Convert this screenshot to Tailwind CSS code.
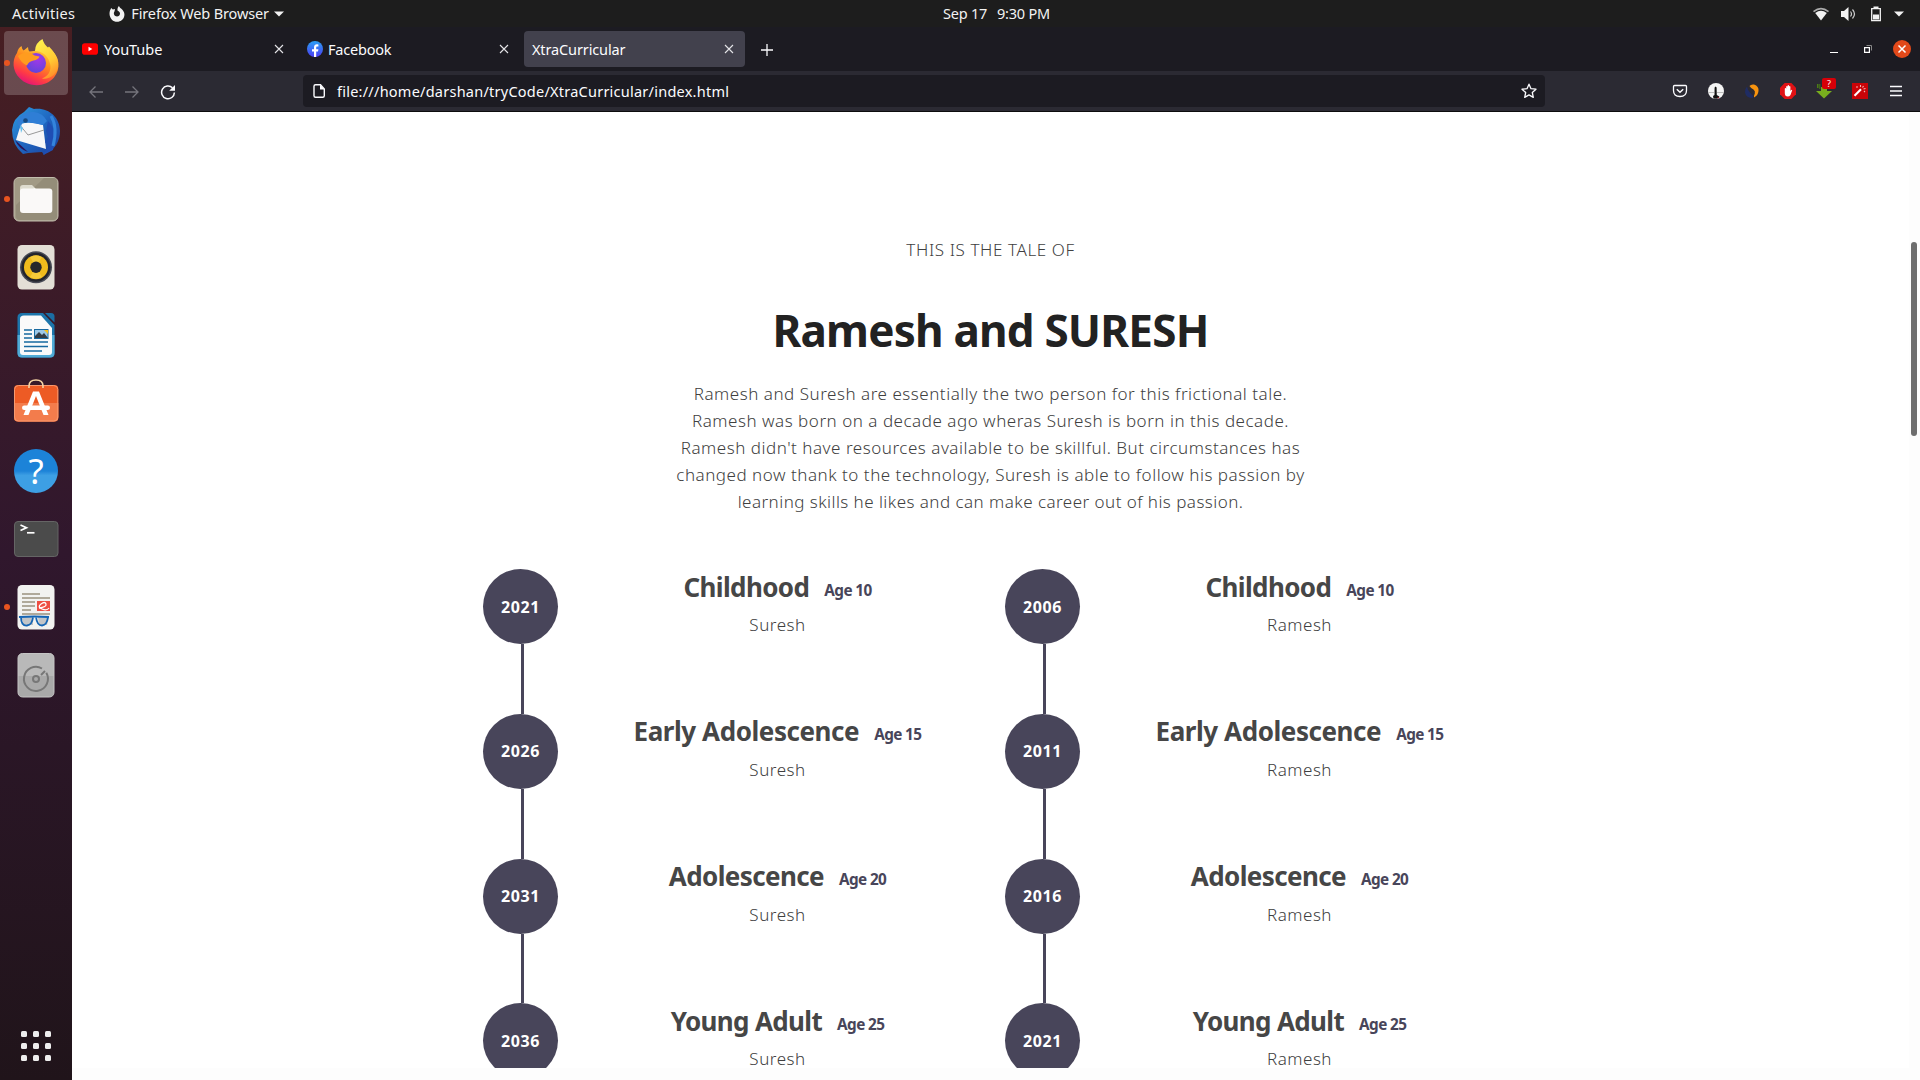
<!DOCTYPE html>
<html lang="en">
<head>
<meta charset="utf-8">
<title>XtraCurricular</title>
<script src="https://cdn.jsdelivr.net/npm/@tailwindcss/browser@4"></script>
</head>
<body class="h-[1080px] w-[1920px] overflow-hidden bg-[#1c1b22] font-['Noto_Sans',sans-serif] text-[14.5px] text-[#fbfbfe]">
<div class="flex h-[1080px] flex-col">
  <!-- desktop top bar -->
  <header class="grid h-[27px] shrink-0 grid-cols-3 items-center bg-[#1d1d1d] text-[#f2f2f2]">
    <div class="flex items-center pl-3 whitespace-nowrap">
      <span class="tracking-[0.29px]">Activities</span>
      <svg class="ml-[34px] h-4 w-4" viewBox="0 0 16 16"><path fill="#f2f2f2" d="M1 4.500 2.200 2l1.600 1.500L6 3 5.500 5.500C4.500 6.500 4.600 9 6.300 10c2 1.200 4.700 0 4.700-2.500C11 6 9.500 5 8.500 4.500 8.300 2.800 8.700 1.300 10 0c.3 1.600 2 2.200 3.600 4 2.700 3.200 2.300 7-.4 9.700-3 2.800-7.500 2.800-10.300 0C.5 11.400 0 7.500 1 4.500z"/></svg>
      <span class="ml-[6px] tracking-[-0.14px]">Firefox Web Browser</span>
      <svg class="ml-[5px] h-[6px] w-[10px]" viewBox="0 0 10 6"><path fill="#f2f2f2" d="M0 .5h10L5 5.500z"/></svg>
    </div>
    <div class="flex items-center pl-[303px] whitespace-nowrap">
      <span class="w-[54px] tracking-[-0.2px]">Sep 17</span><span class="tracking-[-0.2px]">9:30 PM</span>
    </div>
    <div class="flex items-center justify-end pr-4">
      <svg class="h-4 w-4" viewBox="0 0 16 16"><path fill="#aaa" d="M0 5Q8-1.500 16 5L15 6.300Q8 .8 1 6.300z"/><path fill="#f2f2f2" d="M2.200 7Q8 2.500 13.800 7L8 14.500z"/></svg>
      <svg class="ml-3 h-4 w-4" viewBox="0 0 16 16"><path fill="#f2f2f2" d="M0 5h3l4.500-4v14L3 11H0z"/><path d="M9.500 5.500q2 2.500 0 5M11.500 3.500q4 4.500 0 9" fill="none" stroke="#ccc" stroke-width="1.200"/></svg>
      <svg class="ml-[13px] h-4 w-3" viewBox="0 0 12 16"><path d="M1.700 2.700h8.600v12H1.700z" fill="none" stroke="#f2f2f2" stroke-width="1.300"/><path fill="#f2f2f2" d="M3.500.5h5v2h-5zM3 8.500h6v5H3z"/></svg>
      <svg class="ml-[12px] h-[6px] w-[10px]" viewBox="0 0 10 6"><path fill="#f2f2f2" d="M0 .5h10L5 5.500z"/></svg>
    </div>
  </header>

  <div class="flex min-h-0 flex-1">
    <!-- dock -->
    <aside class="flex w-[72px] shrink-0 flex-col items-center justify-between bg-linear-to-b from-[#471e22] via-[#30172d] to-[#20141a] pt-1 pb-[19px]">
      <div class="flex w-full flex-col gap-1 px-1">
        <div class="relative rounded bg-white/20">
          <svg class="h-16 w-16" viewBox="0 0 64 64">
            <defs>
              <linearGradient id="ffb" x1=".8" y1=".1" x2=".3" y2="1"><stop offset="0" stop-color="#ffd83a"/><stop offset=".4" stop-color="#ff8a1e"/><stop offset=".75" stop-color="#ff3b45"/><stop offset="1" stop-color="#e2107c"/></linearGradient>
              <linearGradient id="fff" x1=".3" y1="0" x2=".7" y2="1"><stop offset="0" stop-color="#fff04d"/><stop offset=".6" stop-color="#ffc933"/><stop offset="1" stop-color="#ff8a2a"/></linearGradient>
              <radialGradient id="ffp" cx=".6" cy=".3" r=".8"><stop offset="0" stop-color="#a238e8"/><stop offset="1" stop-color="#5a45d8"/></radialGradient>
            </defs>
            <path fill="url(#ffb)" d="M13 22q1-5 4.500-7 .3 3 2.200 4.500L24 16q0 3 1.500 4.500L46 18c10 7 11 20 4 28.500-8.500 10-25 10-34 1C8 39.500 8 29 13 22z"/>
            <path fill="url(#fff)" d="M31 20q0-8 7.500-12 1.200 5 5.500 8.500l1-1c10 10 12 20 5 28-4 4-9 5-12 4 6-2 10-8 8-15C44 24 37 20 31 20z"/>
            <circle cx="32" cy="32" r="10" fill="url(#ffp)"/>
            <path fill="#ff9c1f" d="M14 25q6-5 13-3 3 3 8.500 3.500-1 3-6 4-5 1-6.500 5Q17 32 14 25z"/>
          </svg>
          <i class="absolute top-[29px] left-0 h-[6px] w-[6px] rounded-full bg-[#e95420]"></i>
        </div>
        <svg class="h-16 w-16" viewBox="0 0 64 64">
          <defs><linearGradient id="tb" x1="0" y1="0" x2="1" y2="1"><stop offset="0" stop-color="#2e9be0"/><stop offset=".5" stop-color="#1f66c0"/><stop offset="1" stop-color="#1c3f9c"/></linearGradient></defs>
          <path fill="url(#tb)" d="M8 31q1-12 12-18l5-5 5 2c14-2 26 8 26 22 0 10-5 19-15 23l-1 1-2-3-14 1-5 1q-11-9-11-24z"/>
          <path fill="#2a1458" d="M11 41l13 12q-9-3-13-12z"/>
          <path fill="#f7f7f8" d="M17 25q8-3 22 1l3 24-30-9z"/>
          <path d="M15 25l9 11 16-5" fill="none" stroke="#999" stroke-width="1"/>
          <path fill="#2f7ed6" d="M13 22q6-10 17-9 9 1 13 9l-4 4-20-4-3 8z"/><circle cx="21.500" cy="21.500" r="2.300" fill="#174a82"/><path fill="#69c2ee" d="M16 26l3 3-2 5z"/>
          <path fill="#1f4eb4" d="M44 22q10 10 5 29l-10 5 5-9-3-4 3-5-2-6z"/>
          <path d="M47 17q7 11 2 30" fill="none" stroke="#3484dc" stroke-width="3"/>
        </svg>
        <div class="relative">
          <svg class="h-16 w-16" viewBox="0 0 64 64">
            <rect x="10" y="10.500" width="44" height="43.500" rx="5" fill="#a19a85" stroke="#c3beae"/><path fill="#8f8873" opacity=".7" d="M12 38L40 11h10q3 0 3 4v34q0 4-4 4H16q-4 0-4-4z"/>
            <path fill="#dedccf" d="M16 21q0-3 3-3h9l4 4h-2v6H16z"/><rect x="16" y="21.500" width="32.300" height="24.500" rx="3" fill="#faf9f8"/><path fill="#faf9f8" d="M16 25q0-2 2-2h9l4-2v6H16z"/>
          </svg>
          <i class="absolute top-[29px] left-0 h-[6px] w-[6px] rounded-full bg-[#e95420]"></i>
        </div>
        <svg class="h-16 w-16" viewBox="0 0 64 64">
          <rect x="13.500" y="10" width="37" height="44.500" rx="4.500" fill="#e3dfd6"/><circle cx="32" cy="32.300" r="16" fill="#484b55"/><circle cx="32" cy="32.300" r="14.500" fill="#23252c"/><circle cx="32" cy="32.300" r="12" fill="#efbb1c"/><path fill="#f8d34c" d="M32 32l-6 10q6 3.500 12 0zM32 32l-6-10q6-3.500 12 0z" opacity=".6"/><circle cx="32" cy="32.300" r="5.700" fill="#26272b"/>
        </svg>
        <svg class="h-16 w-16" viewBox="0 0 64 64">
          <path fill="#1c75ab" d="M18 10h21l11.500 12v28q0 4.500-4.500 4.500H18q-4.500 0-4.500-4.500V14.500q0-4.500 4.500-4.500z"/><path fill="#50abd6" d="M13.500 32h37v18q0 4.500-4.500 4.500H18q-4.500 0-4.500-4.500z"/>
          <path fill="#fafafa" d="M20 12.500h17L48 25v24q0 3-3 3H19q-3 0-3-3V16q0-3.500 4-3.500z"/><path fill="#1b6da3" d="M41 10h6q3.500 0 3.500 3.500v6z"/>
          <path d="M20 27h8M20 31h8M20 35h8M20 39h24M20 43.500h24M20 48h18" stroke="#1769a0" stroke-width="1.700"/><rect x="30.500" y="26.500" width="13.500" height="9" fill="#9cc8e8" stroke="#1769a0"/><path fill="#333d46" d="M31 35v-2l4-4 3 3 2-2 4 5z"/><path fill="#f7c21c" d="M40 27h4v4z"/>
        </svg>
        <svg class="h-16 w-16" viewBox="0 0 64 64">
          <rect x="10" y="14" width="44.300" height="36.500" rx="4" fill="#ed5b25"/><path fill="#f37c4c" d="M10 32h44.300v14.500q0 4-4 4H14q-4 0-4-4z"/><rect x="10.500" y="14.500" width="43.300" height="35.500" rx="4" fill="none" stroke="#f79a70"/>
          <path d="M25 17v-2q0-6 7-6t7 6v2" fill="none" stroke="#f5d4a4" stroke-width="1.600"/>
          <path fill="#fff" d="M29 20.500h6L44.500 44h-5L32 25l-7.500 19h-5z"/><rect x="18" y="34.500" width="28" height="4.500" rx="2.200" fill="#fff"/>
        </svg>
        <div class="flex h-16 w-16 items-center justify-center"><div class="flex h-[44px] w-[44px] items-center justify-center rounded-full bg-linear-to-b from-[#1c83d8] from-50% to-[#3d9fe4] to-60% pb-0.5 text-[35px] leading-none text-white">?</div></div>
        <svg class="h-16 w-16" viewBox="0 0 64 64">
          <rect x="10.500" y="14.500" width="43.500" height="35" rx="3.500" fill="#4b4b4b" stroke="#656565"/><path d="M16.500 18l6 2.700-6 2.800" fill="none" stroke="#fff" stroke-width="1.700"/><path d="M23 25.800h7.500" stroke="#fff" stroke-width="1.700"/>
        </svg>
        <div class="relative">
          <svg class="h-16 w-16" viewBox="0 0 64 64">
            <rect x="13.500" y="10" width="37" height="44.500" rx="4.500" fill="#f2f2f0"/><path d="M18 19h18M18 23h28M18 27h13M18 31h13M18 35h9M18 39h28" stroke="#b0a99a" stroke-width="1.800"/>
            <rect x="33" y="26" width="13" height="10" fill="#ee4e42"/><path d="M35 33q8-1 7-4t-5 0 1 5 7-1" fill="none" stroke="#fff" stroke-width="1.300"/>
            <path fill="#9aa0a8" opacity=".55" d="M17 42h12v8h-9zM34 42h11l-2 8h-8z"/><path d="M15 42q16-1 30 0M17 42q0 9 6 8.500 5-.5 6-8M32 42q1 8.500 6 8.500 5-.5 6-8.500" fill="none" stroke="#1565b4" stroke-width="1.800"/>
          </svg>
          <i class="absolute top-[29px] left-0 h-[6px] w-[6px] rounded-full bg-[#e95420]"></i>
        </div>
        <svg class="h-16 w-16" viewBox="0 0 64 64">
          <rect x="14" y="10.500" width="36" height="43.500" rx="4.500" fill="#a9a9a9" stroke="#c4c4c4"/><path fill="#c4c4c4" opacity=".6" d="M14 15q0-4.500 4.500-4.500h27Q50 10.500 50 15v18H14z"/>
          <path d="M38 25.500a12 12 0 1 0 4.300 4.300" fill="none" stroke="#777" stroke-width="2"/><path d="M37 32l4-4" stroke="#777" stroke-width="2"/><circle cx="32" cy="36" r="3" fill="none" stroke="#777" stroke-width="2"/>
        </svg>
      </div>
      <div class="grid grid-cols-3 gap-[6px]">
        <i class="h-[6px] w-[6px] rounded-[1.5px] bg-[#eee]"></i><i class="h-[6px] w-[6px] rounded-[1.5px] bg-[#eee]"></i><i class="h-[6px] w-[6px] rounded-[1.5px] bg-[#eee]"></i>
        <i class="h-[6px] w-[6px] rounded-[1.5px] bg-[#eee]"></i><i class="h-[6px] w-[6px] rounded-[1.5px] bg-[#eee]"></i><i class="h-[6px] w-[6px] rounded-[1.5px] bg-[#eee]"></i>
        <i class="h-[6px] w-[6px] rounded-[1.5px] bg-[#eee]"></i><i class="h-[6px] w-[6px] rounded-[1.5px] bg-[#eee]"></i><i class="h-[6px] w-[6px] rounded-[1.5px] bg-[#eee]"></i>
      </div>
    </aside>

    <div class="flex min-w-0 flex-1 flex-col">
      <!-- tabs -->
      <div class="flex h-11 shrink-0 items-center bg-[#1c1b22] pl-[2px]">
        <div class="flex gap-1">
          <div class="flex h-9 w-[221px] items-center pr-[11px] pl-2">
            <svg class="h-4 w-4" viewBox="0 0 16 16"><rect y="2.300" width="16" height="11.400" rx="2.800" fill="#f00"/><path fill="#fff" d="M6.500 5.700v4.600L10.300 8z"/></svg>
            <span class="ml-[6px] flex-1 pt-0.5 tracking-[-0.05px]">YouTube</span>
            <svg class="h-[10px] w-[10px]" viewBox="0 0 10 10"><path d="M1 1l8 8M9 1L1 9" stroke="#e4e4e8" stroke-width="1.100"/></svg>
          </div>
          <div class="flex h-9 w-[221px] items-center pr-[11px] pl-2">
            <svg class="h-4 w-4" viewBox="0 0 16 16"><defs><linearGradient id="fb" x1="0" y1="0" x2="0" y2="1"><stop offset="0" stop-color="#2aa0f5"/><stop offset="1" stop-color="#4b3df0"/></linearGradient></defs><circle cx="8" cy="8" r="8" fill="url(#fb)"/><path fill="#fff" d="M7 16v-5.500H5V8.200h2V6.500C7 4.400 8.200 3.300 10 3.300l1.400.1v2h-1c-1 0-1.200.5-1.200 1.200v1.600h2.200l-.4 2.300H9.200V16z"/></svg>
            <span class="ml-[5px] flex-1 pt-0.5 tracking-[-0.2px]">Facebook</span>
            <svg class="h-[10px] w-[10px]" viewBox="0 0 10 10"><path d="M1 1l8 8M9 1L1 9" stroke="#e4e4e8" stroke-width="1.100"/></svg>
          </div>
          <div class="flex h-9 w-[221px] items-center rounded bg-[#42414d] pr-[11px] pl-2">
            <span class="flex-1 pt-0.5 tracking-[-0.13px]">XtraCurricular</span>
            <svg class="h-[10px] w-[10px]" viewBox="0 0 10 10"><path d="M1 1l8 8M9 1L1 9" stroke="#e4e4e8" stroke-width="1.100"/></svg>
          </div>
        </div>
        <svg class="mt-px ml-[16px] h-3 w-3" viewBox="0 0 12 12"><path d="M6 0v12M0 6h12" stroke="#fbfbfe" stroke-width="1.300"/></svg>
        <div class="ml-auto flex items-center pr-[9px]">
          <svg class="mt-1 h-3 w-2" viewBox="0 0 8 12"><path fill="#fff" d="M0 7h8v1H0z"/></svg>
          <svg class="ml-[26px] h-2 w-2" viewBox="0 0 8 8"><path d="M2.500.5h5v5" fill="none" stroke="#888"/><path d="M.6 2.600h4.800v4.800H.6z" fill="none" stroke="#fff" stroke-width="1.200"/></svg>
          <svg class="ml-[21px] h-[18px] w-[18px]" viewBox="0 0 18 18"><circle cx="9" cy="9" r="9" fill="#e2491a"/><path d="M5.500 5.500l7 7m0-7l-7 7" stroke="#fff" stroke-width="1.500"/></svg>
        </div>
      </div>
      <!-- toolbar -->
      <div class="flex h-[41px] shrink-0 items-center border-b border-[#0c0c0d] bg-[#2b2a33] pr-4 pl-[6px]">
        <svg class="mx-[10px] mt-px h-4 w-4" viewBox="0 0 16 16"><path d="M15 8H2M7.500 2.500L2 8l5.500 5.500" fill="none" stroke="#75747c" stroke-width="1.300"/></svg>
        <svg class="mx-[10px] mt-px h-4 w-4" viewBox="0 0 16 16"><path d="M1 8h13M8.500 2.500L14 8l-5.500 5.500" fill="none" stroke="#75747c" stroke-width="1.300"/></svg>
        <svg class="mx-[10px] mt-px h-4 w-4" viewBox="0 0 16 16"><path d="M12.500 3.800A6.400 6.400 0 1 0 14.400 8.500" fill="none" stroke="#fbfbfe" stroke-width="1.500"/><path fill="#fbfbfe" d="M15 1v5.800H9.200z"/></svg>
        <div class="ml-[117px] flex h-8 flex-1 items-center rounded bg-[#1c1b22] px-2">
          <svg class="h-4 w-4" viewBox="0 0 16 16"><path d="M4.500 1.700h5L13.300 6v6.800q0 1.500-1.500 1.500H4.500Q3 14.300 3 12.800V3.200q0-1.500 1.500-1.500z" fill="none" stroke="#fbfbfe" stroke-width="1.400"/><path fill="#fbfbfe" d="M9 1.500L13.500 6.500H9z"/></svg>
          <span class="ml-[10px] flex-1 pt-0.5 tracking-[0.24px]">file:///home/darshan/tryCode/XtraCurricular/index.html</span>
          <svg class="h-4 w-4" viewBox="0 0 16 16"><path d="M8 1.200l2 4.500 5 .5-3.700 3.300 1 4.900L8 11.900l-4.300 2.500 1-4.900L1 6.200l5-.5z" fill="none" stroke="#fbfbfe" stroke-width="1.300" stroke-linejoin="round"/></svg>
        </div>
        <div class="ml-[127px] flex items-center gap-5">
          <svg class="h-4 w-4" viewBox="0 0 16 16"><path d="M2.500 2.500h11q1 0 1 1V7.500q0 6-6.500 6t-6.500-6v-4q0-1 1-1z" fill="none" stroke="#fbfbfe" stroke-width="1.300"/><path d="M4.800 6.300L8 9.300l3.200-3" fill="none" stroke="#fbfbfe" stroke-width="1.500"/></svg>
          <svg class="h-4 w-4" viewBox="0 0 16 16"><circle cx="8" cy="8" r="8" fill="#f4f4f4"/><path d="M0 9.500h6M9 9.500h7" stroke="#bbb"/><path fill="#111" d="M6.600 4.500l1-1 1 1 .2 7.500 2.500 1.500-.3 1.500-2.500.8-3-.3-.5-2.500L6.500 12z"/><path fill="#c23" d="M9.500 14l2 .8-1.500.7z"/></svg>
          <svg class="h-4 w-4" viewBox="0 0 16 16"><path fill="#f7930f" d="M5.500 3Q7 1 10 1.500q5 1.500 4.500 6.500-.5 4.500-4.500 6.500-.3-1.500.8-4Q11.500 8 9.500 6.500 7 5.500 5.500 3z"/><path fill="#1f2c63" d="M3 3.500Q.5 6 1 9.500q1 5.500 8 5.500 .3-1.500-.3-2.500Q7 11 6 9.500 3.500 7 3 3.500z"/></svg>
          <svg class="h-4 w-4" viewBox="0 0 16 16"><path fill="#e01114" d="M4.700 0h6.600L16 4.700v6.600L11.300 16H4.700L0 11.300V4.700z"/><path fill="#fff" d="M4.800 6q0-1 .6-1 .7 0 .8 1v-2q0-1 .7-1t.7 1V3q0-1 .7-1T9 3v1q0-1 .7-1t.7 1v4l.8-1q.8-.5 1 .3L10.500 12Q9.500 13.500 7.800 13.500 4.800 13.500 4.800 10z"/></svg>
          <div class="relative h-4 w-4">
            <svg class="h-4 w-4" viewBox="0 0 16 16"><path fill="#78ae1e" d="M5 4h6v4h5L8 15.500 0 8h5z"/><path fill="#4c7d14" d="M1 1h1.500v4H1zM3.300 1h1v5h-1z"/></svg>
            <span class="absolute -top-[5px] left-[6px] flex h-[11px] w-[14px] items-center justify-center rounded-xs bg-[#d70008] text-[9px] leading-none text-white">?</span>
          </div>
          <svg class="h-4 w-4" viewBox="0 0 16 16"><path fill="#c90408" d="M0 0h16v16H0z"/><path d="M2.500 12.700L9 6.300" stroke="#fff" stroke-width="2.200"/><path d="M4 4h2M8.500 2v2M11.500 3l-1 1.500M13.500 5.500l-2 .5M12 8l1 1" stroke="#f3b4b4" stroke-width="1.100"/></svg>
          <svg class="h-4 w-4" viewBox="0 0 16 16"><path d="M2 3.500h12M2 8h12M2 12.500h12" stroke="#fbfbfe" stroke-width="1.400"/></svg>
        </div>
      </div>
      <!-- page -->
      <div class="flex min-h-0 flex-1 bg-[#fdfdfd]">
        <main class="h-[956px] w-[1837px] overflow-hidden bg-white pt-[124px] text-center text-[17px] leading-[27px] font-light text-[#404040]">
          <p class="tracking-[0.6px]">THIS IS THE TALE OF</p>
          <h1 class="mt-[37px] text-[44px] leading-[60px] font-bold tracking-[-0.8px] text-[#222]">Ramesh and SURESH</h1>
          <p class="mt-[20px] tracking-[0.52px]">Ramesh and Suresh are essentially the two person for this frictional tale.<br>Ramesh was born on a decade ago wheras Suresh is born in this decade.<br>Ramesh didn't have resources available to be skillful. But circumstances has<br>changed now thank to the technology, Suresh is able to follow his passion by<br><span class="tracking-[0.46px]">learning skills he likes and can make career out of his passion.</span></p>
          <div id="timelines" class="mt-[54px] flex gap-[10px] pl-[411px]"></div>
        </main>
        <div class="flex flex-1 justify-end pt-[130px] pr-[3px]"><div class="h-[194px] w-[6px] rounded-full bg-[#6e6e6e]"></div></div>
      </div>
    </div>
  </div>
</div>
<script>
const stages = [["Childhood", "Age 10", "tracking-[-0.6px]"], ["Early Adolescence", "Age 15", "tracking-[-0.43px]"], ["Adolescence", "Age 20", "tracking-[-0.6px]"], ["Young Adult", "Age 25", "tracking-[-0.65px]"]];
const people = [["Suresh", [2021, 2026, 2031, 2036]], ["Ramesh", [2006, 2011, 2016, 2021]]];
document.getElementById("timelines").innerHTML = people.map(([name, years]) =>
  `<section class="w-[512px]">` + stages.map(([title, age, spacing], i) =>
    `<article class="flex h-[144.8px]">
      <div class="flex w-[75px] flex-col">
        <div class="flex h-[75px] w-[75px] shrink-0 items-center justify-center rounded-full bg-[#48455a] text-base font-bold tracking-[0.6px] text-white">${years[i]}</div>
        <div class="ml-[38px] w-[3px] flex-1 bg-[#48455a]"></div>
      </div>
      <div class="flex-1 pt-[0.6px] pl-[2px]">
        <h2 class="text-[26px] leading-[34px] font-bold whitespace-nowrap text-[#464646] ${spacing}">${title}<span class="ml-[15px] align-[1px] text-[15.3px] leading-none tracking-[-0.6px] text-[#48455a]">${age}</span></h2>
        <p class="mt-[7.4px] tracking-[0.5px]">${name}</p>
      </div>
    </article>`).join("") + `</section>`).join("");
</script>
</body>
</html>
